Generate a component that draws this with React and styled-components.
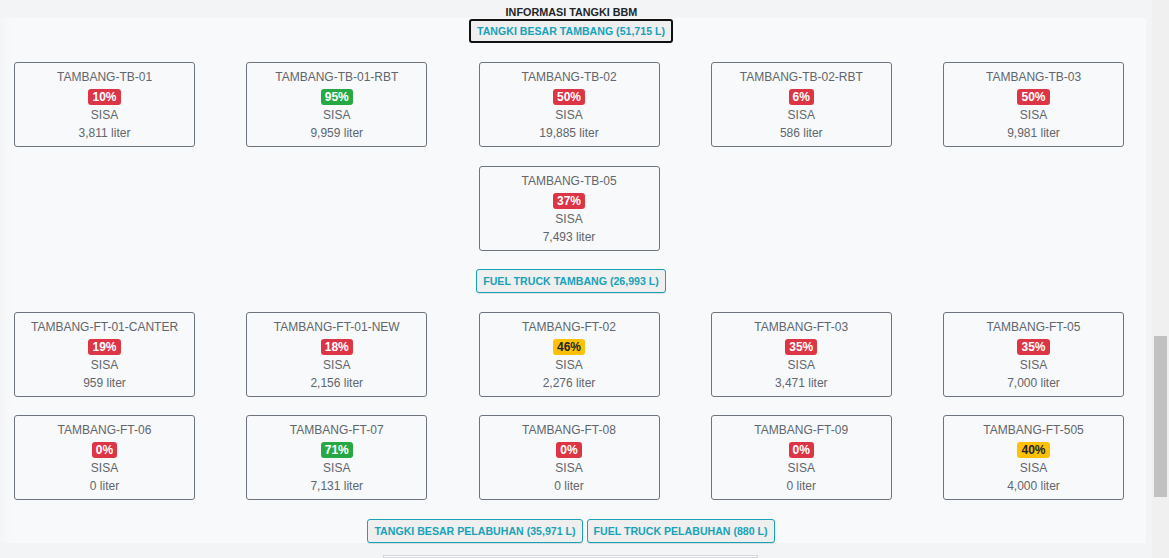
import React from "react";
import styled, { createGlobalStyle } from "styled-components";

const GlobalStyle = createGlobalStyle`
  html, body {
    margin: 0;
    padding: 0;
    height: 100%;
    overflow: hidden;
    background: #f3f4f6;
    font-family: "Liberation Sans", Arial, sans-serif;
  }
`;

const tangkiBesar = [
  { name: "TAMBANG-TB-01", pct: 10, tone: "red", liter: "3,811" },
  { name: "TAMBANG-TB-01-RBT", pct: 95, tone: "green", liter: "9,959" },
  { name: "TAMBANG-TB-02", pct: 50, tone: "red", liter: "19,885" },
  { name: "TAMBANG-TB-02-RBT", pct: 6, tone: "red", liter: "586" },
  { name: "TAMBANG-TB-03", pct: 50, tone: "red", liter: "9,981" },
  { name: "TAMBANG-TB-05", pct: 37, tone: "red", liter: "7,493" },
];

const fuelTruck = [
  { name: "TAMBANG-FT-01-CANTER", pct: 19, tone: "red", liter: "959" },
  { name: "TAMBANG-FT-01-NEW", pct: 18, tone: "red", liter: "2,156" },
  { name: "TAMBANG-FT-02", pct: 46, tone: "yellow", liter: "2,276" },
  { name: "TAMBANG-FT-03", pct: 35, tone: "red", liter: "3,471" },
  { name: "TAMBANG-FT-05", pct: 35, tone: "red", liter: "7,000" },
  { name: "TAMBANG-FT-06", pct: 0, tone: "red", liter: "0" },
  { name: "TAMBANG-FT-07", pct: 71, tone: "green", liter: "7,131" },
  { name: "TAMBANG-FT-08", pct: 0, tone: "red", liter: "0" },
  { name: "TAMBANG-FT-09", pct: 0, tone: "red", liter: "0" },
  { name: "TAMBANG-FT-505", pct: 40, tone: "yellow", liter: "4,000" },
];

const tones = {
  red: { bg: "#dc3545", fg: "#ffffff" },
  green: { bg: "#28a745", fg: "#ffffff" },
  yellow: { bg: "#ffc107", fg: "#212529" },
};

export default function App() {
  return (
    <>
      <GlobalStyle />
      <Screen>
        <Main>
          <Heading>INFORMASI TANGKI BBM</Heading>
          <Panel>
            <ButtonRow>
              <GroupButton $active>TANGKI BESAR TAMBANG (51,715 L)</GroupButton>
            </ButtonRow>
            <CardGrid $rowGap={19} $after={-1}>
              {tangkiBesar.map((t) => (
                <TankCard key={t.name} {...t} />
              ))}
            </CardGrid>
            <ButtonRow>
              <GroupButton>FUEL TRUCK TAMBANG (26,993 L)</GroupButton>
            </ButtonRow>
            <CardGrid $rowGap={18} $after={0}>
              {fuelTruck.map((t) => (
                <TankCard key={t.name} {...t} />
              ))}
            </CardGrid>
            <ButtonRow>
              <GroupButton>TANGKI BESAR PELABUHAN (35,971 L)</GroupButton>
              <GroupButton>FUEL TRUCK PELABUHAN (880 L)</GroupButton>
            </ButtonRow>
          </Panel>
          <NextBox />
        </Main>
        <ScrollTrack>
          <ScrollThumb />
        </ScrollTrack>
      </Screen>
    </>
  );
}

function TankCard({ name, pct, tone, liter }) {
  return (
    <Card>
      <CardTitle>{name}</CardTitle>
      <Badge $tone={tone}>{pct}%</Badge>
      <CardText>SISA</CardText>
      <CardText>{liter} liter</CardText>
    </Card>
  );
}

const Screen = styled.div`
  display: flex;
  width: 1169px;
  height: 558px;
  overflow: hidden;
`;

const Main = styled.div`
  flex: 1;
  display: flex;
  flex-direction: column;
  align-items: flex-start;
  background: #f3f4f6;
`;

const Heading = styled.div`
  width: 1146px;
  height: 18px;
  padding-right: 3px;
  box-sizing: border-box;
  text-align: center;
  font-size: 10.8px;
  font-weight: 700;
  line-height: 24px;
  color: #212529;
`;

const Panel = styled.div`
  width: 1146px;
  box-sizing: border-box;
  padding: 1px 8px 0 0;
  background: #f8f9fa;
  box-shadow: inset 14px 0 12px -10px rgba(0, 0, 0, 0.025);
  display: flex;
  flex-direction: column;
  gap: 19px;
`;

const ButtonRow = styled.div`
  display: flex;
  justify-content: center;
  gap: 4px;
  padding-left: 4px;
`;

const GroupButton = styled.button`
  height: 24px;
  padding: 0 6px;
  box-sizing: border-box;
  border: ${(p) => (p.$active ? "2px solid #111" : "1px solid #17a2b8")};
  border-radius: 3px;
  background: #efefef;
  color: #17a2b8;
  font-family: "Liberation Sans", Arial, sans-serif;
  font-size: 10.6px;
  font-weight: 700;
  white-space: nowrap;
  box-shadow: ${(p) => (p.$active ? "none" : "0 1px 0 rgba(0,0,0,0.1)")};
`;

const CardGrid = styled.div`
  width: 1112px;
  margin: 0 auto ${(p) => p.$after}px;
  display: flex;
  flex-wrap: wrap;
  justify-content: center;
  column-gap: 51.25px;
  row-gap: ${(p) => p.$rowGap}px;
`;

const Card = styled.div`
  width: 181px;
  height: 85px;
  box-sizing: border-box;
  padding-top: 5px;
  border: 1px solid #6c757d;
  border-radius: 3px;
  background: #f8f9fa;
  display: flex;
  flex-direction: column;
  align-items: center;
`;

const CardTitle = styled.div`
  font-size: 12px;
  line-height: 18px;
  color: #5f666d;
`;

const Badge = styled.span`
  margin: 3px 0 1px;
  height: 16px;
  padding: 0 4px;
  border-radius: 3px;
  background: ${(p) => tones[p.$tone].bg};
  color: ${(p) => tones[p.$tone].fg};
  font-size: 12px;
  font-weight: 700;
  line-height: 16px;
`;

const CardText = styled.div`
  font-size: 12px;
  line-height: 18px;
  color: #5f666d;
`;

const NextBox = styled.div`
  margin: 12px 0 0 383px;
  width: 375px;
  height: 20px;
  box-sizing: border-box;
  border: 1px solid #d3d6da;
  background: #ffffff;
`;

const ScrollTrack = styled.div`
  width: 17px;
  background: #f0f0f0;
  display: flex;
  justify-content: center;
`;

const ScrollThumb = styled.div`
  width: 13px;
  height: 161px;
  margin-top: 336px;
  background: #c1c1c1;
`;
